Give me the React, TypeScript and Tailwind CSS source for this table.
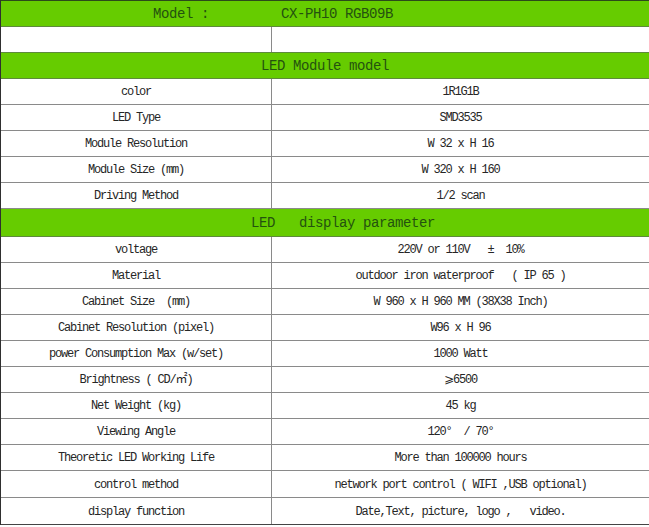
const moduleRows: [string, string][] = [
  ["color", "1R1G1B"],
  ["LED Type", "SMD3535"],
  ["Module Resolution", "W 32 x H 16"],
  ["Module Size (mm)", "W 320 x H 160"],
  ["Driving Method", "1/2 scan"],
];

const displayRows: [string, string, string?][] = [
  ["voltage", "220V or 110V   ±  10%"],
  ["Material", "outdoor iron waterproof   ( IP 65 )"],
  ["Cabinet Size  (mm)", "W 960 x H 960 MM (38X38 Inch)"],
  ["Cabinet Resolution (pixel)", "W96 x H 96"],
  ["power Consumption Max (w/set)", "1000 Watt"],
  ["Brightness ( CD/㎡)", "⩾6500"],
  ["Net Weight (kg)", "45 kg"],
  ["Viewing Angle", "120°  / 70°"],
  ["Theoretic LED Working Life", "More than 100000 hours"],
  ["control method", "network port control ( WIFI ,USB optional)", "h-[27px]"],
  ["display function", "Date,Text, picture, logo ,   video.", "h-[27px] border-b-[#444]"],
];

const mono = "font-['Liberation_Mono','DejaVu_Sans','Noto_Sans_CJK_SC',monospace]";

function Row({ label, value, h = "h-[26px]" }: { label: string; value: string; h?: string }) {
  return (
    <div className={`flex ${h} border-b border-[#8a8a8a] text-[12px] tracking-[-1.2px] text-[#262626] whitespace-pre`}>
      <div className="w-[271px] flex items-center justify-center pt-px border-r border-[#8a8a8a]">{label}</div>
      <div className="flex-1 flex items-center justify-center pt-px">{value}</div>
    </div>
  );
}

function GreenRow({ text, pad, h = "h-[26px]" }: { text: string; pad: string; h?: string }) {
  return (
    <div className={`flex items-center pt-px ${h} ${pad} bg-[#66cc00] border-b border-[#5e8a3c] text-[14px] tracking-[-0.4px] text-[#24520f] whitespace-pre`}>
      {text}
    </div>
  );
}

export default function App() {
  return (
    <div className="w-[649px] h-[527px] bg-white overflow-hidden">
      <div className={`w-[649px] border-l border-[#2f2f2f] border-t border-t-[#2c4a1a] ${mono}`}>
        <GreenRow text="Model :         CX-PH10 RGB09B" pad="pl-[152px]" />
        <div className="flex h-[26px] border-b border-[#5e8a3c]">
          <div className="w-[271px] border-r border-[#8a8a8a]" />
          <div className="flex-1" />
        </div>
        <GreenRow text="LED Module model" pad="pl-[260px]" />
        {moduleRows.map(([l, v]) => (
          <Row key={l} label={l} value={v} />
        ))}
        <GreenRow text="LED   display parameter" pad="pl-[250px]" h="h-[28px]" />
        {displayRows.map(([l, v, h]) => (
          <Row key={l} label={l} value={v} h={h} />
        ))}
      </div>
    </div>
  );
}
